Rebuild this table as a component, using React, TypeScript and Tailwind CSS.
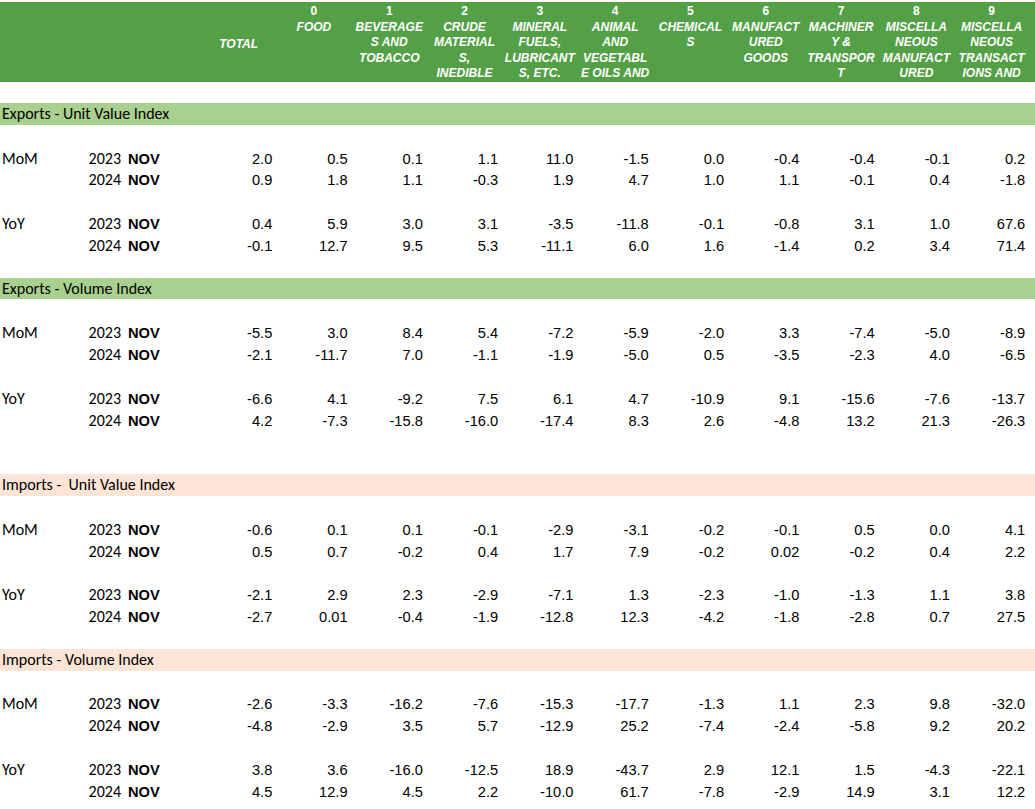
const GRID = 'grid grid-cols-[86px_38px_77px_repeat(11,75.3px)]';

const columns: { code: string; lines: string[] }[] = [
  { code: '0', lines: ['FOOD'] },
  { code: '1', lines: ['BEVERAGE', 'S AND', 'TOBACCO'] },
  { code: '2', lines: ['CRUDE', 'MATERIAL', 'S,', 'INEDIBLE'] },
  { code: '3', lines: ['MINERAL', 'FUELS,', 'LUBRICANT', 'S, ETC.'] },
  { code: '4', lines: ['ANIMAL', 'AND', 'VEGETABL', 'E OILS AND'] },
  { code: '5', lines: ['CHEMICAL', 'S'] },
  { code: '6', lines: ['MANUFACT', 'URED', 'GOODS'] },
  { code: '7', lines: ['MACHINER', 'Y &', 'TRANSPOR', 'T'] },
  { code: '8', lines: ['MISCELLA', 'NEOUS', 'MANUFACT', 'URED'] },
  { code: '9', lines: ['MISCELLA', 'NEOUS', 'TRANSACT', 'IONS AND'] },
];

type Section = {
  title: string;
  tone: 'green' | 'peach';
  mom: [string[], string[]];
  yoy: [string[], string[]];
  after: number;
};

const sections: Section[] = [
  {
    title: 'Exports - Unit Value Index',
    tone: 'green',
    mom: [
      ['2.0', '0.5', '0.1', '1.1', '11.0', '-1.5', '0.0', '-0.4', '-0.4', '-0.1', '0.2'],
      ['0.9', '1.8', '1.1', '-0.3', '1.9', '4.7', '1.0', '1.1', '-0.1', '0.4', '-1.8'],
    ],
    yoy: [
      ['0.4', '5.9', '3.0', '3.1', '-3.5', '-11.8', '-0.1', '-0.8', '3.1', '1.0', '67.6'],
      ['-0.1', '12.7', '9.5', '5.3', '-11.1', '6.0', '1.6', '-1.4', '0.2', '3.4', '71.4'],
    ],
    after: 1,
  },
  {
    title: 'Exports - Volume Index',
    tone: 'green',
    mom: [
      ['-5.5', '3.0', '8.4', '5.4', '-7.2', '-5.9', '-2.0', '3.3', '-7.4', '-5.0', '-8.9'],
      ['-2.1', '-11.7', '7.0', '-1.1', '-1.9', '-5.0', '0.5', '-3.5', '-2.3', '4.0', '-6.5'],
    ],
    yoy: [
      ['-6.6', '4.1', '-9.2', '7.5', '6.1', '4.7', '-10.9', '9.1', '-15.6', '-7.6', '-13.7'],
      ['4.2', '-7.3', '-15.8', '-16.0', '-17.4', '8.3', '2.6', '-4.8', '13.2', '21.3', '-26.3'],
    ],
    after: 2,
  },
  {
    title: 'Imports -  Unit Value Index',
    tone: 'peach',
    mom: [
      ['-0.6', '0.1', '0.1', '-0.1', '-2.9', '-3.1', '-0.2', '-0.1', '0.5', '0.0', '4.1'],
      ['0.5', '0.7', '-0.2', '0.4', '1.7', '7.9', '-0.2', '0.02', '-0.2', '0.4', '2.2'],
    ],
    yoy: [
      ['-2.1', '2.9', '2.3', '-2.9', '-7.1', '1.3', '-2.3', '-1.0', '-1.3', '1.1', '3.8'],
      ['-2.7', '0.01', '-0.4', '-1.9', '-12.8', '12.3', '-4.2', '-1.8', '-2.8', '0.7', '27.5'],
    ],
    after: 1,
  },
  {
    title: 'Imports - Volume Index',
    tone: 'peach',
    mom: [
      ['-2.6', '-3.3', '-16.2', '-7.6', '-15.3', '-17.7', '-1.3', '1.1', '2.3', '9.8', '-32.0'],
      ['-4.8', '-2.9', '3.5', '5.7', '-12.9', '25.2', '-7.4', '-2.4', '-5.8', '9.2', '20.2'],
    ],
    yoy: [
      ['3.8', '3.6', '-16.0', '-12.5', '18.9', '-43.7', '2.9', '12.1', '1.5', '-4.3', '-22.1'],
      ['4.5', '12.9', '4.5', '2.2', '-10.0', '61.7', '-7.8', '-2.9', '14.9', '3.1', '12.2'],
    ],
    after: 0,
  },
];

const Header = () => (
  <div className="mt-[2px] h-[80px] bg-[#54a047] text-white">
    <div className={`${GRID} h-full font-['Liberation_Sans',Arial,sans-serif] text-[12px] leading-[15.5px] font-bold`}>
      <div className="col-span-3" />
      <div className="flex items-center justify-center pt-[5px] italic">TOTAL</div>
      {columns.map((c) => (
        <div key={c.code} className="flex flex-col items-center overflow-hidden pt-[2px] text-center">
          <span>{c.code}</span>
          {c.lines.map((l, i) => (
            <span key={i} className="italic whitespace-pre">
              {l}
            </span>
          ))}
        </div>
      ))}
    </div>
  </div>
);

const Blank = () => <div className="h-[21.84px]" />;

const DataRow = ({ label, year, values }: { label?: string; year: string; values: string[] }) => (
  <div className={`${GRID} h-[21.84px] items-center pb-[2px] text-[14.67px] text-black`}>
    <div className="pl-[2px] font-['Carlito','Lato',sans-serif] text-[16px]">{label}</div>
    <div className="pr-[3px] text-right font-['Carlito','Lato',sans-serif] text-[16px]">{year}</div>
    <div className="pl-[4px] font-['Liberation_Sans',Arial,sans-serif] font-bold">NOV</div>
    {values.map((v, i) => (
      <div key={i} className="pr-[4px] text-right font-['Liberation_Sans',Arial,sans-serif]">
        {v}
      </div>
    ))}
  </div>
);

const SectionBlock = ({ s }: { s: Section }) => (
  <>
    <div
      className={`flex h-[21.84px] items-center pl-[2px] font-['Carlito','Lato',sans-serif] text-[16px] whitespace-pre text-black ${
        s.tone === 'green' ? 'bg-[#a9d08e]' : 'bg-[#fce4d6]'
      }`}
    >
      {s.title}
    </div>
    <Blank />
    <DataRow label="MoM" year="2023" values={s.mom[0]} />
    <DataRow year="2024" values={s.mom[1]} />
    <Blank />
    <DataRow label="YoY" year="2023" values={s.yoy[0]} />
    <DataRow year="2024" values={s.yoy[1]} />
    {Array.from({ length: s.after }).map((_, i) => (
      <Blank key={i} />
    ))}
  </>
);

export default function App() {
  return (
    <div className="h-[809px] w-[1035px] overflow-hidden bg-white">
      <Header />
      <div className="h-[21px]" />
      {sections.map((s) => (
        <SectionBlock key={s.title} s={s} />
      ))}
    </div>
  );
}
